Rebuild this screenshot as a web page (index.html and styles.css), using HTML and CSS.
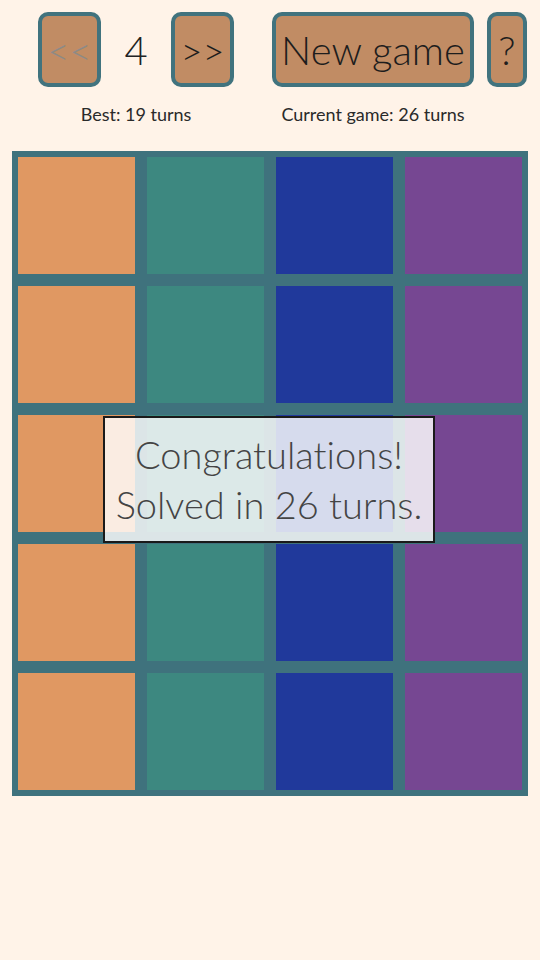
FILE: index.html
```html
<!DOCTYPE html>
<html>
<head>
<meta charset="utf-8">
<link rel="stylesheet" href="styles.css">
</head>
<body>
<div class="top">
  <div class="group left">
    <div class="row">
      <button class="btn sq disabled">&lt;&lt;</button>
      <span class="num">4</span>
      <button class="btn sq">&gt;&gt;</button>
    </div>
    <div class="label">Best: 19 turns</div>
  </div>
  <div class="group right">
    <div class="row">
      <button class="btn wide">New game</button>
      <button class="btn help">?</button>
    </div>
    <div class="label current">Current game: 26 turns</div>
  </div>
</div>
<div class="board">
  <div class="cell c1"></div><div class="cell c2"></div><div class="cell c3"></div><div class="cell c4"></div>
  <div class="cell c1"></div><div class="cell c2"></div><div class="cell c3"></div><div class="cell c4"></div>
  <div class="cell c1"></div><div class="cell c2"></div><div class="cell c3"></div><div class="cell c4"></div>
  <div class="cell c1"></div><div class="cell c2"></div><div class="cell c3"></div><div class="cell c4"></div>
  <div class="cell c1"></div><div class="cell c2"></div><div class="cell c3"></div><div class="cell c4"></div>
  <div class="msg">Congratulations!<br>Solved in 26 turns.</div>
</div>
</body>
</html>
```
FILE: styles.css
```css
html, body {
  margin: 0;
  padding: 0;
  background: #fff3e8;
  font-family: Lato, "Open Sans", sans-serif;
  font-weight: 300;
  font-variant-ligatures: none;
  color: #222;
}
.top {
  display: flex;
  padding: 12px 13px 0 38px;
  gap: 38px;
  height: 139px;
  box-sizing: border-box;
}
.group {
  display: flex;
  flex-direction: column;
  align-items: center;
}
.row {
  display: flex;
  align-items: center;
}
.right .row { gap: 13px; }
.btn {
  box-sizing: border-box;
  height: 75px;
  border: 4px solid #41737e;
  border-radius: 10px;
  background: #c18c64;
  font-family: inherit;
  font-weight: 300;
  font-variant-ligatures: none;
  font-size: 40px;
  color: #1d1d1d;
  padding: 0;
  line-height: 1;
}
.sq { width: 63px; font-size: 38px; }
.disabled { color: #8d8a86; }
.num {
  width: 70px;
  text-align: center;
  font-size: 40px;
  color: #222;
}
.wide { width: 202px; }
.help { width: 40px; }
.label {
  margin-top: 16px;
  font-size: 18px;
  font-weight: 400;
  color: #2a2a2a;
}
.current {
  align-self: flex-start;
  width: 202px;
  text-align: center;
  white-space: nowrap;
}
.board {
  position: relative;
  margin: 12px 12px 0;
  padding: 6px;
  background: #3f727d;
  display: grid;
  grid-template-columns: repeat(4, 117px);
  grid-auto-rows: 117px;
  gap: 12px;
  width: 516px;
  box-sizing: border-box;
}
.c1 { background: #e09862; }
.c2 { background: #3d8880; }
.c3 { background: #20399b; }
.c4 { background: #764792; }
.msg {
  position: absolute;
  left: 91px;
  top: 265px;
  width: 332px;
  height: 127px;
  box-sizing: border-box;
  border: 2px solid #1a1a1a;
  background: rgba(255, 255, 255, 0.82);
  color: #444;
  font-size: 38px;
  line-height: 50px;
  text-align: center;
  padding-top: 11px;
}
```
